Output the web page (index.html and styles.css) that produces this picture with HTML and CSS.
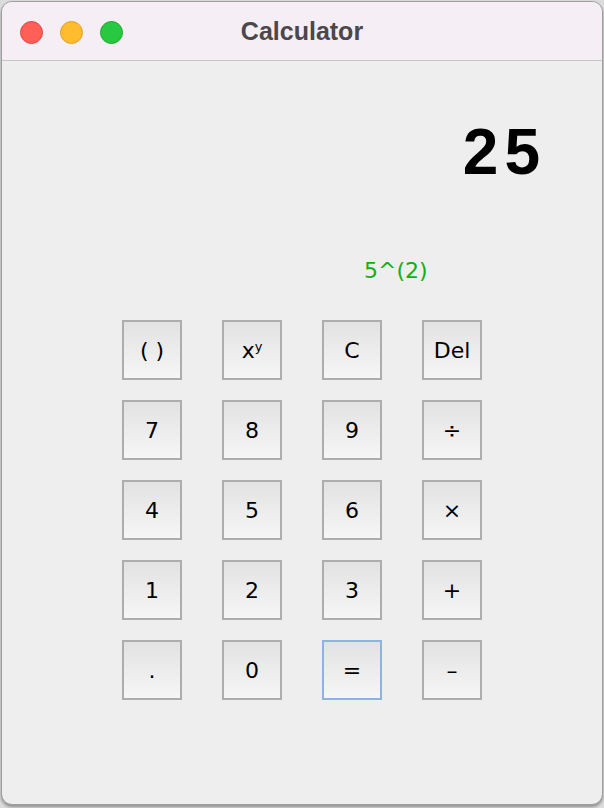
FILE: index.html
```html
<!DOCTYPE html>
<html>
<head>
<meta charset="utf-8">
<link rel="stylesheet" href="styles.css">
</head>
<body>
<div class="window">
  <div class="titlebar">
    <div class="lights">
      <span class="light red"></span>
      <span class="light yellow"></span>
      <span class="light green"></span>
    </div>
    <div class="title">Calculator</div>
    <div></div>
  </div>
  <div class="content">
    <div class="display">25</div>
    <div class="expr">5^(2)</div>
    <div class="keys">
      <button class="key">( )</button>
      <button class="key">x<sup>y</sup></button>
      <button class="key">C</button>
      <button class="key">Del</button>
      <button class="key">7</button>
      <button class="key">8</button>
      <button class="key">9</button>
      <button class="key">÷</button>
      <button class="key">4</button>
      <button class="key">5</button>
      <button class="key">6</button>
      <button class="key">×</button>
      <button class="key">1</button>
      <button class="key">2</button>
      <button class="key">3</button>
      <button class="key">+</button>
      <button class="key">.</button>
      <button class="key">0</button>
      <button class="key focus">=</button>
      <button class="key">–</button>
    </div>
  </div>
</div>
</body>
</html>
```
FILE: styles.css
```css
html, body {
  margin: 0;
  padding: 0;
}
body {
  background: #dcdcdc;
  width: 604px;
  height: 808px;
  overflow: hidden;
}
.window {
  box-sizing: border-box;
  width: 602px;
  height: 804px;
  margin: 1px 1px 0 1px;
  border: 1px solid #9e9e9e;
  border-radius: 11px;
  background: #eeeeee;
  overflow: hidden;
  box-shadow: 0 2px 3px rgba(0, 0, 0, 0.35);
}
.titlebar {
  height: 58px;
  background: #f5eef5;
  border-bottom: 1px solid #c8c5c8;
  display: grid;
  grid-template-columns: 1fr auto 1fr;
  align-items: center;
}
.lights {
  display: flex;
  gap: 17px;
  padding-left: 18px;
  padding-top: 2px;
}
.light {
  width: 23px;
  height: 23px;
  border-radius: 50%;
  box-sizing: border-box;
}
.red { background: #ff5f57; border: 1px solid #e2463f; }
.yellow { background: #febc2e; border: 1px solid #e1a125; }
.green { background: #28c840; border: 1px solid #1aab29; }
.title {
  font-family: "Liberation Sans", Arial, sans-serif;
  font-weight: bold;
  font-size: 25px;
  color: #4b474a;
  padding-top: 1px;
}
.content {
  display: flex;
  flex-direction: column;
}
.display {
  margin-top: 59px;
  align-self: flex-end;
  margin-right: 56px;
  font-family: "Liberation Sans", Arial, sans-serif;
  font-weight: bold;
  font-size: 64px;
  line-height: 64px;
  color: #000;
  letter-spacing: 6px;
}
.expr {
  margin-top: 76px;
  padding-left: 362px;
  font-family: "DejaVu Sans", sans-serif;
  font-size: 22px;
  line-height: 22px;
  color: #10b010;
}
.keys {
  margin-top: 38px;
  padding-left: 120px;
  display: grid;
  grid-template-columns: repeat(4, 60px);
  grid-auto-rows: 60px;
  column-gap: 40px;
  row-gap: 20px;
}
.key {
  box-sizing: border-box;
  width: 60px;
  height: 60px;
  margin: 0;
  padding: 0;
  border: 2px solid #adadad;
  border-radius: 0;
  background: linear-gradient(to bottom, #e2e2e2, #f6f6f6);
  font-family: "DejaVu Sans", sans-serif;
  font-size: 22px;
  color: #000;
  display: flex;
  align-items: center;
  justify-content: center;
}
.key sup {
  font-size: 13px;
  position: relative;
  top: -4px;
}
.key.focus {
  border: 2px solid #8db3e0;
}
```
